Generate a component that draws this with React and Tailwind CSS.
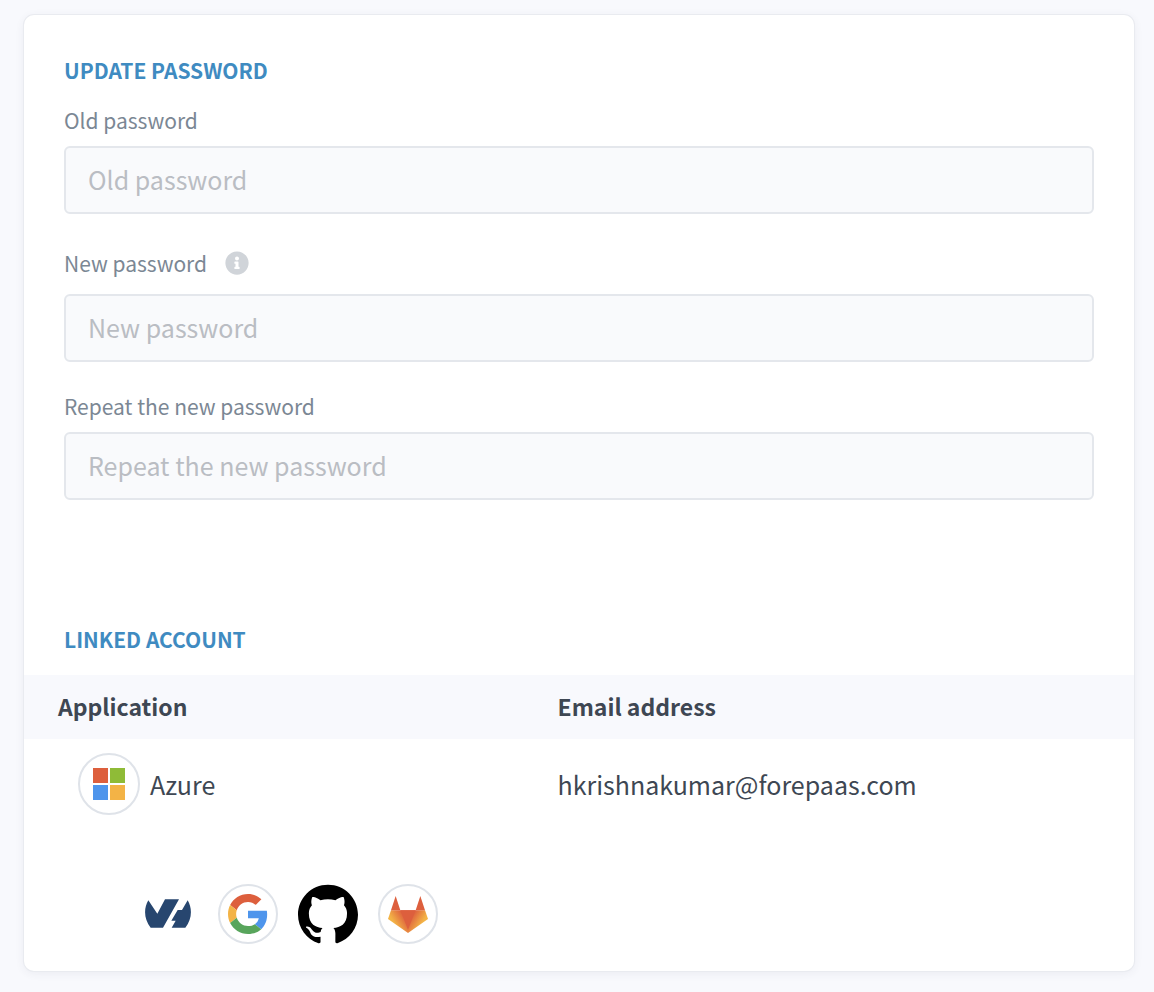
import { FaInfoCircle } from "react-icons/fa";
import { SiGithub } from "react-icons/si";

function MicrosoftLogo() {
  return (
    <svg viewBox="0 0 32 32" className="size-8" aria-hidden="true">
      <path fill="#dd5f3d" d="M0 0h15v15H0z" />
      <path fill="#8fbb37" d="M17 0h15v15H17z" />
      <path fill="#4e95ec" d="M0 17h15v15H0z" />
      <path fill="#f3b346" d="M17 17h15v15H17z" />
    </svg>
  );
}

function OvhLogo() {
  return (
    <svg viewBox="0 0 138 88" className="w-[46px]" aria-hidden="true">
      <path
        fill="#27466f"
        d="M10 4C-4 28-4 60 17 86H54L102 1H60L37 44ZM128 4C142 28 142 60 121 86H80L92 65H79L98 33H111Z"
      />
    </svg>
  );
}

function GoogleLogo() {
  return (
    <svg viewBox="0 0 48 48" className="size-10" aria-hidden="true">
      <path fill="#dd5f3d" d="M24 9.5c3.54 0 6.71 1.22 9.21 3.6l6.85-6.85C35.9 2.38 30.47 0 24 0 14.62 0 6.51 5.38 2.56 13.22l7.98 6.19C12.43 13.72 17.74 9.5 24 9.5z" />
      <path fill="#4e95ec" d="M46.98 24.55c0-1.57-.15-3.09-.38-4.55H24v9.02h12.94c-.58 2.96-2.26 5.48-4.78 7.18l7.73 6c4.51-4.18 7.09-10.36 7.09-17.65z" />
      <path fill="#f3b346" d="M10.53 28.59c-.48-1.45-.76-2.99-.76-4.59s.27-3.14.76-4.59l-7.98-6.19C.92 16.46 0 20.12 0 24c0 3.88.92 7.54 2.56 10.78l7.97-6.19z" />
      <path fill="#58a55c" d="M24 48c6.48 0 11.93-2.13 15.89-5.81l-7.73-6c-2.15 1.45-4.92 2.3-8.16 2.3-6.26 0-11.57-4.22-13.47-9.91l-7.98 6.19C6.51 42.62 14.62 48 24 48z" />
    </svg>
  );
}

function GitlabLogo() {
  return (
    <svg viewBox="0 0 120 111" className="w-10" aria-hidden="true">
      <defs>
        <linearGradient id="tanuki-left" gradientUnits="userSpaceOnUse" x1="46" y1="54" x2="14" y2="74">
          <stop offset="0" stopColor="#dd5f3d" />
          <stop offset="1" stopColor="#f3b346" />
        </linearGradient>
        <linearGradient id="tanuki-right" gradientUnits="userSpaceOnUse" x1="74" y1="54" x2="106" y2="74">
          <stop offset="0" stopColor="#dd5f3d" />
          <stop offset="1" stopColor="#f3b346" />
        </linearGradient>
      </defs>
      <path fill="url(#tanuki-left)" d="M9 43 0 69l60 42V43z" />
      <path fill="url(#tanuki-right)" d="M111 43l9 26-60 42V43z" />
      <path fill="#dd5f3d" d="M37 43h46l-23 58zM9 43 23 0l14 43zM111 43 97 0 83 43z" />
    </svg>
  );
}

function Heading({ children }) {
  return (
    <h2 className="text-[21px] leading-8 font-bold text-[#3f8bc1] uppercase">{children}</h2>
  );
}

function PasswordField({ id, label, info }) {
  return (
    <div>
      <div className={info ? "flex h-[42px] items-center gap-[18px]" : "flex h-8 items-center"}>
        <label htmlFor={id} className="text-[21px] leading-8 text-[#7b8794]">
          {label}
        </label>
        {info && (
          <button type="button" aria-label="Password rules" className="text-[#d0d4d9]">
            <FaInfoCircle className="size-6" />
          </button>
        )}
      </div>
      <input
        id={id}
        type="password"
        placeholder={label}
        className="mt-[10px] block h-[68px] w-full rounded-md border-2 border-[#e4e7ec] bg-[#f9fafc] px-[22px] pb-[2px] text-[25px] text-[#3e4753] outline-none placeholder:text-[#babdc3] focus:border-[#3f8bc1]"
      />
    </div>
  );
}

function ProviderButton({ label, className, children }) {
  return (
    <button
      type="button"
      aria-label={label}
      className={`flex size-[60px] items-center justify-center rounded-full ${className}`}
    >
      {children}
    </button>
  );
}

export default function App() {
  return (
    <div className="min-h-screen bg-[#f8f9fd] pt-[15px] pr-5 pb-5 pl-6 font-['Noto_Sans_CJK_SC',sans-serif]">
      <main className="rounded-[10px] bg-white pt-[39px] pb-[27px] shadow-[0_0_0_1px_#e9ebf0,0_2px_10px_rgba(60,70,90,0.08)]">
        <form className="px-10">
          <Heading>Update password</Heading>
          <div className="mt-[18px] flex flex-col gap-7">
            <PasswordField id="old-password" label="Old password" />
            <PasswordField id="new-password" label="New password" info />
            <PasswordField id="repeat-password" label="Repeat the new password" />
          </div>
        </form>

        <section className="mt-[123px]">
          <div className="px-10">
            <Heading>Linked account</Heading>
          </div>
          <table className="mt-5 w-full table-fixed text-left text-[25px] leading-9 text-[#3e4753]">
            <thead className="bg-[#f8f9fd]">
              <tr className="h-16">
                <th className="w-[45%] pb-[2px] pl-[34px] text-[23px] font-bold">Application</th>
                <th className="pb-[2px] pl-[34px] text-[23px] font-bold">Email address</th>
              </tr>
            </thead>
            <tbody>
              <tr className="h-[90px]">
                <td className="pl-[54px]">
                  <div className="flex items-center gap-[10px]">
                    <span className="flex size-[62px] items-center justify-center rounded-full border-2 border-[#dfe3e9]">
                      <MicrosoftLogo />
                    </span>
                    Azure
                  </div>
                </td>
                <td className="pl-[34px]">hkrishnakumar@forepaas.com</td>
              </tr>
            </tbody>
          </table>
          <div className="mt-[55px] flex gap-5 pl-[114px]">
            <ProviderButton label="Link OVH" className="">
              <OvhLogo />
            </ProviderButton>
            <ProviderButton label="Link Google" className="border-2 border-[#dfe3e9]">
              <GoogleLogo />
            </ProviderButton>
            <ProviderButton label="Link GitHub" className="text-black">
              <SiGithub className="size-[60px]" />
            </ProviderButton>
            <ProviderButton label="Link GitLab" className="border-2 border-[#dfe3e9]">
              <GitlabLogo />
            </ProviderButton>
          </div>
        </section>
      </main>
    </div>
  );
}
